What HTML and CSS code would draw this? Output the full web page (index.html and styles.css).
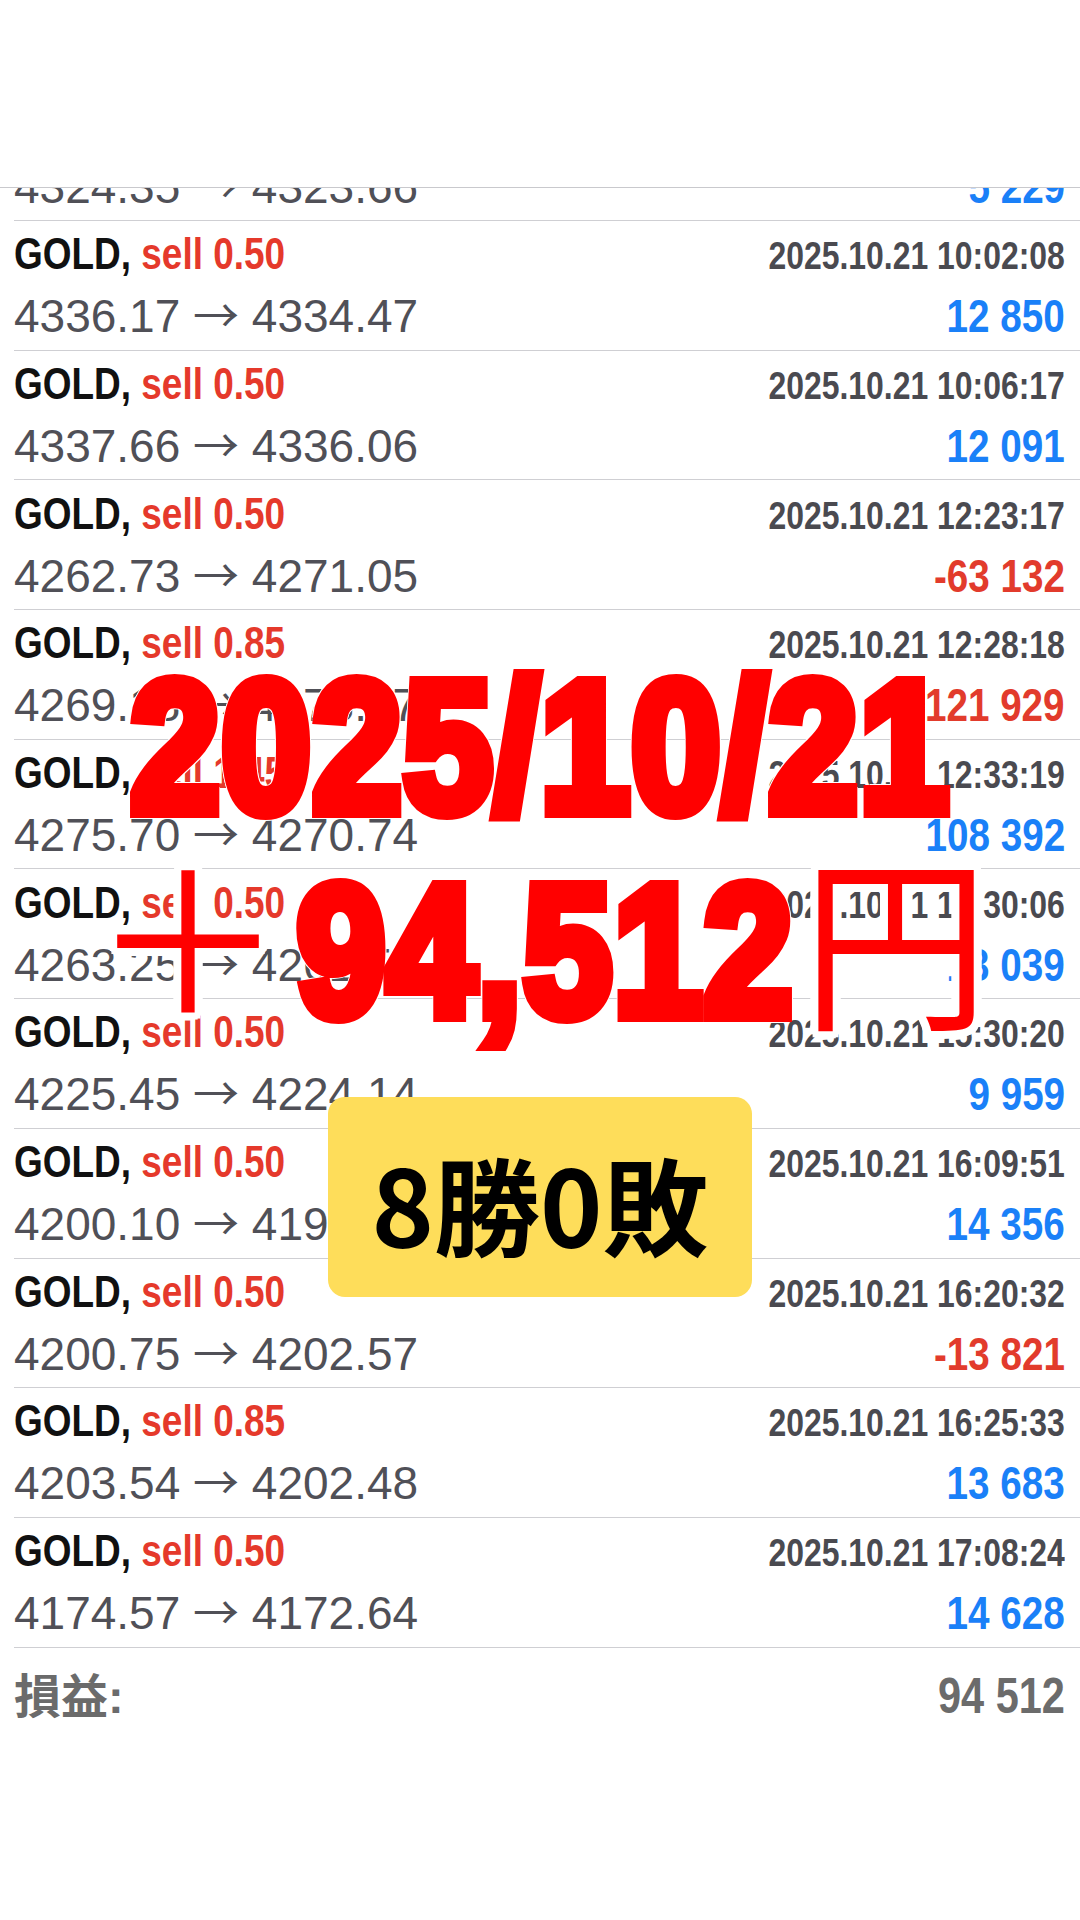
FILE: index.html
```html
<!DOCTYPE html>
<html lang="ja">
<head>
    <meta charset="UTF-8">
    <meta name="viewport" content="width=device-width, initial-scale=1.0">
    <title>取引履歴</title>
    <link rel="stylesheet" href="styles.css">
</head>
<body>
<div class="screen">
    <div class="topbar"></div>

    <div class="history">
        <div class="deals">
            <div class="deal">
                <div class="line">
                    <span class="symbol">GOLD, <span class="sell">sell 0.50</span></span>
                    <span class="time">2025.10.21 09:41:12</span>
                </div>
                <div class="line">
                    <span class="prices">4324.35 <span class="arrow">→</span> 4323.66</span>
                    <span class="profit">5 229</span>
                </div>
            </div>
            <div class="deal">
                <div class="line">
                    <span class="symbol">GOLD, <span class="sell">sell 0.50</span></span>
                    <span class="time">2025.10.21 10:02:08</span>
                </div>
                <div class="line">
                    <span class="prices">4336.17 <span class="arrow">→</span> 4334.47</span>
                    <span class="profit">12 850</span>
                </div>
            </div>
            <div class="deal">
                <div class="line">
                    <span class="symbol">GOLD, <span class="sell">sell 0.50</span></span>
                    <span class="time">2025.10.21 10:06:17</span>
                </div>
                <div class="line">
                    <span class="prices">4337.66 <span class="arrow">→</span> 4336.06</span>
                    <span class="profit">12 091</span>
                </div>
            </div>
            <div class="deal">
                <div class="line">
                    <span class="symbol">GOLD, <span class="sell">sell 0.50</span></span>
                    <span class="time">2025.10.21 12:23:17</span>
                </div>
                <div class="line">
                    <span class="prices">4262.73 <span class="arrow">→</span> 4271.05</span>
                    <span class="profit loss">-63 132</span>
                </div>
            </div>
            <div class="deal">
                <div class="line">
                    <span class="symbol">GOLD, <span class="sell">sell 0.85</span></span>
                    <span class="time">2025.10.21 12:28:18</span>
                </div>
                <div class="line">
                    <span class="prices">4269.18 <span class="arrow">→</span> 4278.67</span>
                    <span class="profit loss">-121 929</span>
                </div>
            </div>
            <div class="deal">
                <div class="line">
                    <span class="symbol">GOLD, <span class="sell">sell 1.45</span></span>
                    <span class="time">2025.10.21 12:33:19</span>
                </div>
                <div class="line">
                    <span class="prices">4275.70 <span class="arrow">→</span> 4270.74</span>
                    <span class="profit">108 392</span>
                </div>
            </div>
            <div class="deal">
                <div class="line">
                    <span class="symbol">GOLD, <span class="sell">sell 0.50</span></span>
                    <span class="time">2025.10.21 13:30:06</span>
                </div>
                <div class="line">
                    <span class="prices">4263.25 <span class="arrow">→</span> 4261.52</span>
                    <span class="profit">13 039</span>
                </div>
            </div>
            <div class="deal">
                <div class="line">
                    <span class="symbol">GOLD, <span class="sell">sell 0.50</span></span>
                    <span class="time">2025.10.21 15:30:20</span>
                </div>
                <div class="line">
                    <span class="prices">4225.45 <span class="arrow">→</span> 4224.14</span>
                    <span class="profit">9 959</span>
                </div>
            </div>
            <div class="deal">
                <div class="line">
                    <span class="symbol">GOLD, <span class="sell">sell 0.50</span></span>
                    <span class="time">2025.10.21 16:09:51</span>
                </div>
                <div class="line">
                    <span class="prices">4200.10 <span class="arrow">→</span> 4198.20</span>
                    <span class="profit">14 356</span>
                </div>
            </div>
            <div class="deal">
                <div class="line">
                    <span class="symbol">GOLD, <span class="sell">sell 0.50</span></span>
                    <span class="time">2025.10.21 16:20:32</span>
                </div>
                <div class="line">
                    <span class="prices">4200.75 <span class="arrow">→</span> 4202.57</span>
                    <span class="profit loss">-13 821</span>
                </div>
            </div>
            <div class="deal">
                <div class="line">
                    <span class="symbol">GOLD, <span class="sell">sell 0.85</span></span>
                    <span class="time">2025.10.21 16:25:33</span>
                </div>
                <div class="line">
                    <span class="prices">4203.54 <span class="arrow">→</span> 4202.48</span>
                    <span class="profit">13 683</span>
                </div>
            </div>
            <div class="deal">
                <div class="line">
                    <span class="symbol">GOLD, <span class="sell">sell 0.50</span></span>
                    <span class="time">2025.10.21 17:08:24</span>
                </div>
                <div class="line">
                    <span class="prices">4174.57 <span class="arrow">→</span> 4172.64</span>
                    <span class="profit">14 628</span>
                </div>
            </div>
        </div>

        <div class="total">
            <span class="total-label">損益:</span>
            <span class="total-value">94 512</span>
        </div>
    </div>

    <div class="stamp">
        <div class="stamp-date">2025/10/21</div>
        <div class="stamp-sum"><span class="plus">＋</span><span class="sum-digits">94,512</span><span class="yen">円</span></div>
        <div class="badge">8勝0敗</div>
    </div>
</div>
</body>
</html>
```

FILE: styles.css
```css
body {
    margin: 0;
    background: #fff;
}
.screen {
    position: relative;
    width: 1080px;
    height: 1920px;
    overflow: hidden;
    background: #fff;
    font-family: "Liberation Sans", Arial, sans-serif;
}
.topbar {
    height: 187px;
    border-bottom: 1px solid #c9c9cd;
}
.history {
    overflow: hidden;
}
.deals {
    margin-top: -96.7px;
}
.deal {
    height: 129.7px;
    box-sizing: border-box;
    margin-left: 14px;
    padding: 2.3px 15px 0 0;
    border-bottom: 1px solid #cfcfd3;
}
.line {
    display: flex;
    justify-content: space-between;
    align-items: baseline;
    height: 62px;
    line-height: 62px;
    white-space: nowrap;
}
/* condensed bold look of the app font */
.symbol,
.time,
.profit,
.total-value {
    font-weight: bold;
    transform: scaleX(0.84);
}
.symbol {
    font-size: 44px;
    color: #111;
    transform-origin: left center;
}
.sell {
    color: #e5392b;
}
.time {
    font-size: 38px;
    color: #4a4a50;
    transform-origin: right center;
}
.prices {
    font-size: 46px;
    color: #505057;
}
.arrow {
    font-family: "Noto Sans CJK JP", sans-serif;
    font-size: 46px;
    line-height: 0;
}
.profit {
    font-size: 46px;
    color: #1a80f8;
    transform-origin: right center;
}
.profit.loss {
    color: #e23b2c;
}
.total {
    display: flex;
    justify-content: space-between;
    align-items: baseline;
    margin-left: 14px;
    padding: 8px 15px 0 0;
    height: 80px;
    line-height: 80px;
    font-family: "Liberation Sans", "Noto Sans CJK JP", sans-serif;
    font-weight: bold;
    color: #6b6b6b;
}
.total-label {
    font-size: 47px;
}
.total-value {
    font-size: 50px;
    transform: scaleX(0.83);
    transform-origin: right center;
}

/* overlay stamped on top of the list */
.stamp {
    position: absolute;
    top: 0;
    left: 0;
    right: 0;
    z-index: 2;
    display: flex;
    flex-direction: column;
    align-items: center;
    padding-top: 651.8px;
}
.stamp-date,
.stamp-sum {
    font-weight: bold;
    font-size: 186px;
    line-height: 190px;
    height: 190px;
    color: #ff0000;
    white-space: nowrap;
    text-shadow:
        0 8px 0 #fff, 0 -8px 0 #fff, 8px 0 0 #fff, -8px 0 0 #fff,
        5.7px 5.7px 0 #fff, -5.7px 5.7px 0 #fff, 5.7px -5.7px 0 #fff, -5.7px -5.7px 0 #fff,
        3px 7.4px 0 #fff, 7.4px 3px 0 #fff, -3px 7.4px 0 #fff, -7.4px 3px 0 #fff,
        3px -7.4px 0 #fff, 7.4px -3px 0 #fff, -3px -7.4px 0 #fff, -7.4px -3px 0 #fff;
}
.stamp-date,
.sum-digits {
    letter-spacing: 2px;
    -webkit-text-stroke: 14px #ff0000;
}
.stamp-date {
    transform: scaleX(0.862);
}
.stamp-sum {
    margin-top: 14px;
}
.sum-digits {
    display: inline-block;
    margin: 0 -42px;
    transform: scaleX(0.856);
}
.plus,
.yen {
    font-family: "Noto Sans CJK JP", sans-serif;
    font-weight: 400;
    line-height: 0;
}
.plus {
    font-size: 195px;
    margin-right: 11px;
}
.yen {
    font-size: 188px;
    margin-left: 8px;
}
.badge {
    margin-top: 51.5px;
    width: 424px;
    height: 200px;
    border-radius: 17px;
    background: #fedd5a;
    display: flex;
    align-items: center;
    justify-content: center;
    font-family: "Noto Sans CJK JP", sans-serif;
    font-weight: bold;
    font-size: 106px;
    line-height: 1;
    color: #000;
    padding-top: 10px;
    box-sizing: border-box;
}
```
